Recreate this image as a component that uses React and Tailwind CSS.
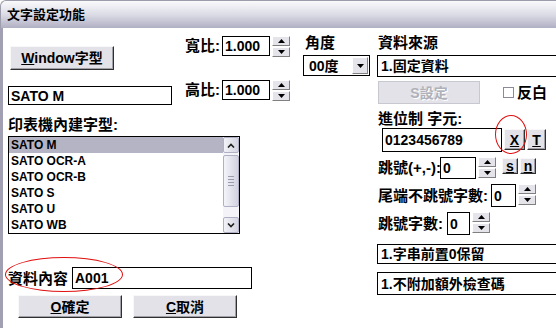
import React from "react";

const FONT = "font-['Liberation_Sans','Noto_Sans_CJK_TC',sans-serif]";

const Arrow = ({ up }) => (
  <svg width="7" height="4" viewBox="0 0 7 4">
    <path d={up ? "M0 4 L3.5 0 L7 4 Z" : "M0 0 L3.5 4 L7 0 Z"} fill="#000" />
  </svg>
);

const SpinBtn = ({ up }) => (
  <div className="w-[18px] h-[10px] flex items-center justify-center bg-[#e4e4ea] border border-t-white border-l-white border-r-[#808080] border-b-[#808080]">
    <Arrow up={up} />
  </div>
);

const Spinner = () => (
  <div className="flex flex-col gap-px ml-[2px]">
    <SpinBtn up />
    <SpinBtn />
  </div>
);

const Field = ({ className = "", children }) => (
  <div className={`shrink-0 border border-black bg-white flex items-center pl-[2px] text-[14px] font-bold leading-none ${className}`}>
    {children}
  </div>
);

const Btn = ({ className = "", children }) => (
  <div className={`shrink-0 flex items-center justify-center bg-[#e2e2e8] border border-t-[#f8f8f8] border-l-[#f8f8f8] border-r-[#303030] border-b-[#303030] shadow-[inset_-1px_-1px_0_#a0a0a8] text-[14px] font-bold leading-none ${className}`}>
    {children}
  </div>
);

const fonts = ["SATO M", "SATO OCR-A", "SATO OCR-B", "SATO S", "SATO U", "SATO WB"];

export default function App() {
  return (
    <div className={`w-[556px] h-[328px] overflow-hidden bg-white text-black ${FONT}`}>
      {/* title bar */}
      <div className="h-[28px] flex items-center pl-[6px] rounded-tl-[6px] border-t border-l border-[#9c9cac] bg-gradient-to-b from-[#fafafc] via-[#dcdce6] to-[#b0b0c4] text-[13px] font-bold">
        文字設定功能
      </div>

      <div className="h-[300px] flex border-l-[3px] border-l-[#a0a0b2]">
        {/* left part */}
        <div className="w-[374px] shrink-0 flex flex-col pl-[5px]">
          <div className="flex">
            <div className="w-[177px] shrink-0 flex flex-col">
              <Btn className="mt-[18px] ml-[2px] w-[104px] h-[24px]">
                <span><span className="underline">W</span>indow字型</span>
              </Btn>
              <Field className="mt-[16px] w-[164px] h-[19px]">SATO M</Field>
            </div>

            <div className="w-[118px] shrink-0 flex flex-col">
              <div className="mt-[8px] flex items-start h-[21px]">
                <span className="w-[37px] text-[15px] font-bold leading-[20px]">寬比:</span>
                <Field className="w-[48px] h-[20px]">1.000</Field>
                <Spinner />
              </div>
              <div className="mt-[23px] flex items-start h-[21px]">
                <span className="w-[37px] text-[15px] font-bold leading-[20px]">高比:</span>
                <Field className="w-[48px] h-[20px]">1.000</Field>
                <Spinner />
              </div>
            </div>

            <div className="flex flex-col">
              <span className="mt-[7px] ml-[2px] text-[15px] font-bold leading-[15px]">角度</span>
              <div className="mt-[5px] w-[67px] h-[21px] border border-black flex items-center justify-between pl-[5px] pr-[1px]">
                <span className="text-[14px] font-bold leading-none">00度</span>
                <div className="w-[16px] h-[17px] flex items-center justify-center bg-[#e4e4ea] border border-t-white border-l-white border-r-[#808080] border-b-[#808080]">
                  <Arrow />
                </div>
              </div>
            </div>
          </div>

          <span className="mt-[12px] text-[15px] font-bold leading-[15px]">印表機內建字型:</span>
          <div className="mt-[4px] w-[232px] h-[98px] border border-black flex">
            <div className="flex-1 flex flex-col">
              {fonts.map((f, i) => (
                <div key={f} className={`h-[16px] pl-[2px] flex items-center text-[12px] font-bold leading-none ${i === 0 ? "bg-[#b4b4c4]" : ""}`}>
                  {f}
                </div>
              ))}
            </div>
            <div className="w-[16px] flex flex-col bg-[#f4f4f8]">
              <div className="h-[16px] flex items-center justify-center border border-[#b0b0c4] rounded-[2px] bg-gradient-to-r from-[#f2f2f8] to-[#d4d4e2]">
                <svg width="8" height="5" viewBox="0 0 8 5"><path d="M1 4.5 L4 1.5 L7 4.5" stroke="#202020" strokeWidth="1.6" fill="none" /></svg>
              </div>
              <div className="mt-[2px] h-[52px] flex flex-col items-center justify-center gap-[2px] border border-[#b0b0c4] rounded-[2px] bg-gradient-to-r from-[#f4f4fa] to-[#d2d2e0]">
                <div className="w-[6px] h-px bg-[#9a9aac]" />
                <div className="w-[6px] h-px bg-[#9a9aac]" />
                <div className="w-[6px] h-px bg-[#9a9aac]" />
                <div className="w-[6px] h-px bg-[#9a9aac]" />
              </div>
              <div className="flex-1" />
              <div className="h-[16px] flex items-center justify-center border border-[#b0b0c4] rounded-[2px] bg-gradient-to-r from-[#f2f2f8] to-[#d4d4e2]">
                <svg width="8" height="5" viewBox="0 0 8 5"><path d="M1 0.5 L4 3.5 L7 0.5" stroke="#202020" strokeWidth="1.6" fill="none" /></svg>
              </div>
            </div>
          </div>

          <div className="relative mt-[33px] flex items-center h-[22px]">
            <span className="w-[64px] text-[15px] font-bold leading-none">資料內容</span>
            <Field className="w-[180px] h-[22px]">A001</Field>
            <div className="absolute left-[-3px] top-[-10px] w-[118px] h-[35px] rounded-[50%] border border-[#e01010]" />
          </div>

          <div className="mt-[6px] flex">
            <Btn className="ml-[10px] w-[104px] h-[23px]">
              <span><span className="underline">O</span>確定</span>
            </Btn>
            <Btn className="ml-[11px] w-[104px] h-[23px]">
              <span><span className="underline">C</span>取消</span>
            </Btn>
          </div>
        </div>

        {/* right part */}
        <div className="w-[200px] shrink-0 flex flex-col">
          <span className="mt-[7px] ml-[1px] text-[15px] font-bold leading-[15px]">資料來源</span>
          <Field className="mt-[5px] w-[200px] h-[22px] pl-[3px]">1.固定資料</Field>

          <div className="mt-[4px] flex items-center h-[23px]">
            <div className="ml-[1px] w-[102px] h-[23px] flex items-center justify-center bg-[#e2e2e8] border border-[#c8c8d0] text-[14px] font-bold leading-none text-[#b0b0b8] [text-shadow:1px_1px_0_#fff]">
              S設定
            </div>
            <div className="ml-[23px] w-[11px] h-[11px] border border-[#8a8a98] bg-white" />
            <span className="ml-[3px] text-[15px] font-bold leading-none">反白</span>
          </div>

          <span className="mt-[7px] ml-[1px] text-[15px] font-bold leading-[15px]">進位制 字元:</span>

          <div className="relative mt-[2px] flex items-start h-[24px]">
            <Field className="ml-[5px] w-[120px] h-[24px]">0123456789</Field>
            <Btn className="ml-[2px] mt-px w-[21px] h-[21px]"><span className="underline">X</span></Btn>
            <Btn className="ml-[2px] mt-px w-[19px] h-[21px]"><span className="underline">T</span></Btn>
            <div className="absolute left-[118px] top-[-13px] w-[32px] h-[39px] rounded-[50%] border border-[#e01010]" />
          </div>

          <div className="mt-[5px] flex items-start h-[23px]">
            <span className="ml-[1px] w-[62px] text-[15px] font-bold leading-[22px] whitespace-nowrap">跳號(+,-):</span>
            <Field className="w-[36px] h-[22px]">0</Field>
            <Spinner />
            <Btn className="ml-[6px] mt-px w-[16px] h-[16px] text-[12px]"><span className="underline">s</span></Btn>
            <Btn className="ml-[2px] mt-px w-[16px] h-[16px] text-[12px]"><span className="underline">n</span></Btn>
          </div>

          <div className="mt-[4px] flex items-start h-[24px]">
            <span className="ml-[1px] w-[113px] text-[15px] font-bold leading-[24px] whitespace-nowrap">尾端不跳號字數:</span>
            <Field className="w-[25px] h-[23px]">0</Field>
            <Spinner />
          </div>

          <div className="mt-[4px] flex items-start h-[24px]">
            <span className="ml-[1px] w-[69px] text-[15px] font-bold leading-[24px] whitespace-nowrap">跳號字數:</span>
            <Field className="w-[23px] h-[23px]">0</Field>
            <Spinner />
          </div>

          <Field className="mt-[8px] w-[200px] h-[20px] pl-[3px]">1.字串前置0保留</Field>
          <Field className="mt-[8px] w-[200px] h-[23px] pl-[3px]">1.不附加額外檢查碼</Field>
        </div>
      </div>
    </div>
  );
}
